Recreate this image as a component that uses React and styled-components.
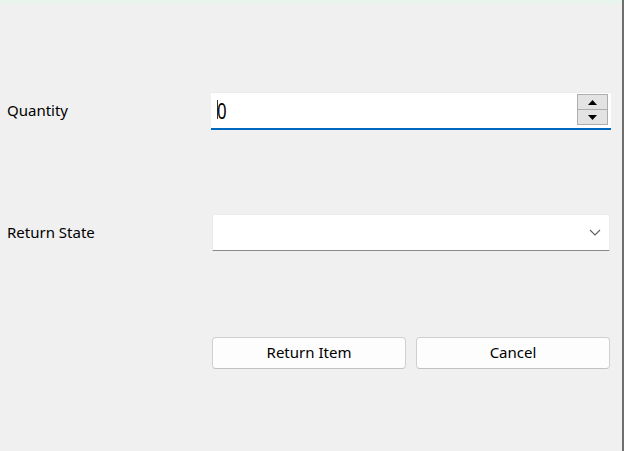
import React from "react";
import styled, { createGlobalStyle } from "styled-components";

const GlobalStyle = createGlobalStyle`
  html, body {
    margin: 0;
    padding: 0;
    background: #f0f0f0;
  }
  body {
    font-family: "Noto Sans", "Liberation Sans", sans-serif;
    color: #000;
  }
`;

const App = () => {
  return (
    <>
      <GlobalStyle />
      <Window>
        <TitleStrip />
        <Form>
          <Row $top={88}>
            <Label>Quantity</Label>
            <SpinBox>
              <SpinValue>
                0
                <Caret />
              </SpinValue>
              <SpinButtons>
                <SpinButton>
                  <Arrow viewBox="0 0 9 5">
                    <path d="M0 5 L4.5 0 L9 5 Z" />
                  </Arrow>
                </SpinButton>
                <SpinButton>
                  <Arrow viewBox="0 0 9 5">
                    <path d="M0 0 L9 0 L4.5 5 Z" />
                  </Arrow>
                </SpinButton>
              </SpinButtons>
            </SpinBox>
          </Row>

          <Row $top={84}>
            <Label>Return State</Label>
            <Combo>
              <Chevron viewBox="0 0 12 7">
                <path d="M1 1 L6 6 L11 1" />
              </Chevron>
            </Combo>
          </Row>

          <Row $top={86}>
            <span />
            <Buttons>
              <Button>Return Item</Button>
              <Button>Cancel</Button>
            </Buttons>
          </Row>
        </Form>
      </Window>
    </>
  );
};

export default App;

const Window = styled.div`
  width: 624px;
  height: 451px;
  box-sizing: border-box;
  border-right: 2px solid #6f6f6f;
  display: flex;
  flex-direction: column;
`;

const TitleStrip = styled.div`
  height: 4px;
  background: #e8f5ee;
`;

const Form = styled.div`
  display: flex;
  flex-direction: column;
  padding: 0 11px 0 7px;
`;

const Row = styled.div`
  display: grid;
  grid-template-columns: 204px 400px;
  align-items: center;
  margin-top: ${(p) => p.$top}px;
`;

const Label = styled.div`
  font-size: 15px;
  line-height: 20px;
  margin-top: -2px;
`;

const SpinBox = styled.div`
  position: relative;
  height: 38px;
  box-sizing: border-box;
  background: #fff;
  border-top: 1px solid #ececec;
  border-bottom: 2px solid #0067c0;
  display: flex;
  align-items: center;
  justify-content: space-between;
  padding: 0 3px 0 6px;
`;

const SpinValue = styled.div`
  position: relative;
  font-size: 21px;
  line-height: 24px;
  letter-spacing: -1px;
  transform: scaleX(0.8);
  transform-origin: left center;
`;

const Caret = styled.span`
  position: absolute;
  left: 0;
  top: 1px;
  width: 1px;
  height: 19px;
  background: #000;
`;

const SpinButtons = styled.div`
  display: flex;
  flex-direction: column;
  width: 31px;
  height: 31px;
  box-sizing: border-box;
  border: 1px solid #adadad;
  background: #e3e3e3;
  margin-top: -2px;
`;

const SpinButton = styled.div`
  flex: 1;
  display: flex;
  align-items: center;
  justify-content: center;

  & + & {
    border-top: 1px solid #adadad;
  }
`;

const Arrow = styled.svg`
  width: 9px;
  height: 5px;
  fill: #000;
`;

const Combo = styled.div`
  height: 37px;
  margin: 0 1px;
  box-sizing: border-box;
  background: #fff;
  border: 1px solid #ebebeb;
  border-bottom: 1px solid #8a8a8a;
  border-radius: 3px 3px 0 0;
  display: flex;
  align-items: center;
  justify-content: flex-end;
  padding-right: 8px;
`;

const Chevron = styled.svg`
  width: 12px;
  height: 7px;
  fill: none;
  stroke: #5f5f5f;
  stroke-width: 1.1;
`;

const Buttons = styled.div`
  display: grid;
  grid-template-columns: 194px 194px;
  column-gap: 10px;
  padding-left: 1px;
`;

const Button = styled.button`
  height: 32px;
  box-sizing: border-box;
  background: #fdfdfd;
  border: 1px solid #d0d0d0;
  border-bottom-color: #c2c2c2;
  border-radius: 4px;
  font-family: "Noto Sans", "Liberation Sans", sans-serif;
  font-size: 15px;
  line-height: 20px;
  color: #000;
  padding: 0 0 2px;
`;
